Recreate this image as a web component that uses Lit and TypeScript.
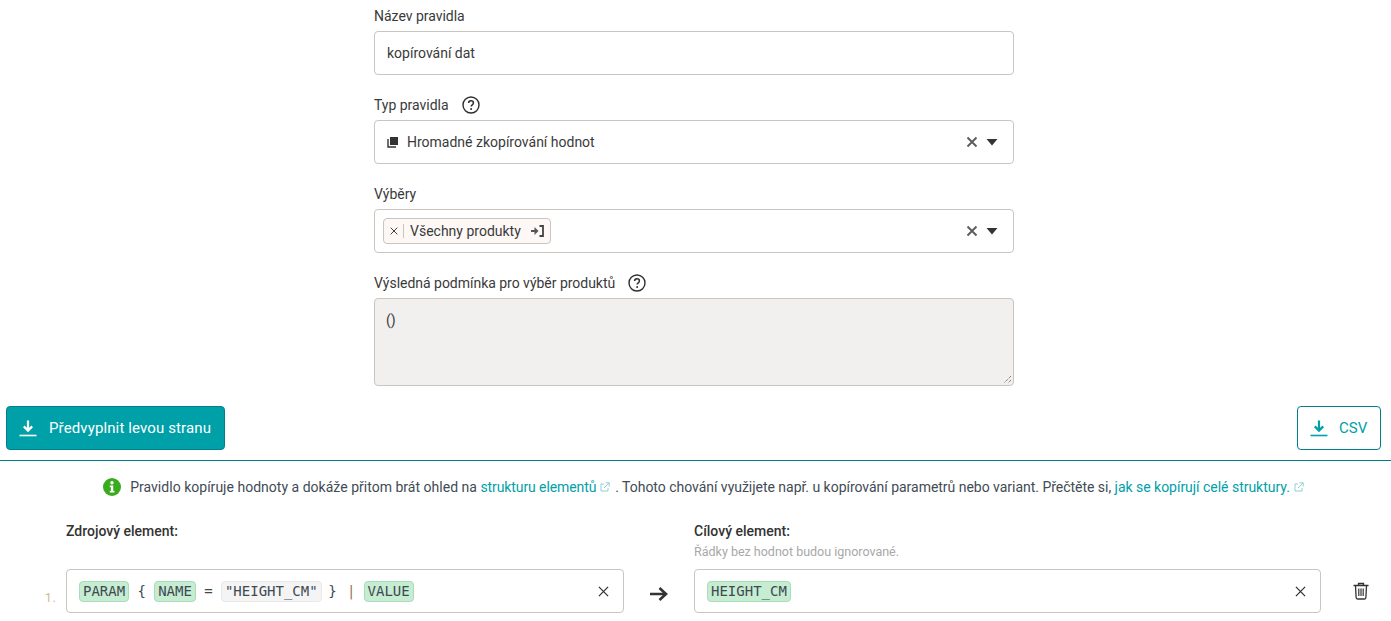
import { LitElement, html, css } from "lit";
import { customElement } from "lit/decorators.js";

const help = html`<svg class="help" width="18" height="18" viewBox="0 0 18 18"><circle cx="9" cy="9" r="8" fill="none" stroke="#2f2f2f" stroke-width="1.4"/><path d="M6.6 7.1c0-1.4 1-2.3 2.4-2.3s2.4.9 2.4 2.1c0 1.9-2.3 1.9-2.3 3.7" fill="none" stroke="#2f2f2f" stroke-width="1.5"/><circle cx="9.1" cy="13" r="1" fill="#2f2f2f"/></svg>`;
const clearIcon = html`<svg class="clr" width="12" height="12" viewBox="0 0 12 12"><path d="M1.5 1.5l9 9M10.5 1.5l-9 9" stroke="#5c5c5c" stroke-width="1.9" fill="none"/></svg>`;
const caret = html`<svg class="caret" width="12" height="8" viewBox="0 0 12 8"><path d="M0.5 1h11L6 7.5z" fill="#333"/></svg>`;
const download = (c: string) => html`<svg width="18" height="18" viewBox="0 0 18 18"><path d="M9 1.500v10M4.800 7.400L9 11.600l4.200-4.200" fill="none" stroke="${c}" stroke-width="2.200"/><path d="M.5 16.500h17" stroke="${c}" stroke-width="1.600"/></svg>`;
const ext = html`<svg class="ext" width="10" height="10" viewBox="0 0 10 10"><path d="M4 2H1v7h7V6M5.500.8h3.700v3.700M9 1L4 6" fill="none" stroke="#8fd0d3" stroke-width="1"/></svg>`;
const x = (s: number) => html`<svg class="x" width="${s}" height="${s}" viewBox="0 0 12 12"><path d="M1 1l10 10M11 1L1 11" stroke="#333" stroke-width="1.400" fill="none"/></svg>`;

@customElement("app-root")
export class AppRoot extends LitElement {
  static styles = css`
    :host { display: block; width: 1391px; height: 621px; overflow: hidden; background: #fff; font: 14px/20px Roboto, sans-serif; color: #3a3a3a; }
    * { box-sizing: border-box; }
    .form { width: 640px; margin: 0 auto 0 374px; padding-top: 6px; display: flex; flex-direction: column; gap: 20px; }
    .label { display: flex; align-items: center; height: 20px; margin-bottom: 5px; letter-spacing: -.02px; }
    .help { margin-left: 13px; }
    .control { height: 44px; border: 1px solid #c9c5bf; border-radius: 4px; display: flex; align-items: center; padding: 0 12px; background: #fff; }
    .select { padding-right: 15px; }
    .grow { flex: 1; }
    .stack { width: 12px; height: 12px; margin-right: 8px; }
    .clr { margin-right: 8px; }
    .tag { height: 26px; margin-left: -4px; border: 1px solid #c9c5bf; border-radius: 4px; background: #fdf8f6; display: flex; align-items: center; padding: 0 6px 0 5px; }
    .tag .x { margin-right: 5px; margin-left: 1px; }
    .tag .sep { width: 1px; height: 14px; background: #c9c5bf; margin-right: 6px; }
    .tag .go { margin-left: 10px; }
    .area { height: 88px; border: 1px solid #c9c5bf; border-radius: 4px; background: #f2f0ee; padding: 11px 11px; position: relative; }
    .grip { position: absolute; right: 1px; bottom: 1px; }
    .toolbar { display: flex; justify-content: space-between; padding: 20px 10px 10px 6px; border-bottom: 1px solid #007f8c; height: 75px; }
    .btn { height: 44px; border-radius: 4px; border: 1px solid #007f8c; display: flex; align-items: center; gap: 12px; padding: 0 12px; font-size: 15px; letter-spacing: .12px; }
    .btn.primary { width: 219px; background: #00a0a8; color: #fff; }
    .btn.outline { width: 84px; background: #fff; color: #00a0a8; letter-spacing: 0; gap: 11px; }
    .info { display: flex; justify-content: center; align-items: center; height: 20px; margin-top: 16px; margin-left: 21px; color: #424b54; font-size: 14px; white-space: pre; }
    .info .i { margin-right: 9px; }
    .info a { color: #00a0a8; }
    .info .lead { letter-spacing: .02px; }
    .info .first { letter-spacing: -.1px; }
    .info .mid { letter-spacing: -.025px; }
    .ext { margin: 0 5px 0 4px; }
    .rules { display: grid; grid-template-columns: 66px 558px 70px 627px 80px; margin-top: 24px; }
    .rules h4 { margin: 0; font-size: 14px; font-weight: 500; line-height: 20px; color: #333; }
    .hint { font-size: 12.5px; line-height: 16px; color: #a8a8a8; height: 28px; padding-top: 3px; }
    .head { height: 48px; }
    .num { font-size: 12px; letter-spacing: 1px; color: #d0b890; padding-left: 45px; align-self: end; line-height: 14px; margin-bottom: 8px; }
    .field { height: 44px; border: 1px solid #c9c5bf; border-radius: 4px; display: flex; align-items: center; padding: 0 14px 0 12px; font: 14px "DejaVu Sans Mono", monospace; color: #3d4a52; }
    .tk { height: 21px; border-radius: 4px; padding: 0 3px; display: flex; align-items: center; border: 1px solid #a9dcb9; background: #c6ecd2; }
    .tk.str { border-color: #e8e8e8; background: #f4f4f4; }
    .sym { margin: 0 8.3px; }
    .sym.close { margin: 0 10.5px 0 6.5px; }
    .sym.pipe { color: #a0705a; margin: 0 8px 0 0; }
    .arrow, .trash { display: flex; align-items: center; justify-content: center; height: 44px; }
    .arrow { padding-top: 6px; }
  `;

  render() {
    return html`
      <div class="form">
        <div><div class="label">Název pravidla</div><div class="control">kopírování dat</div></div>
        <div><div class="label">Typ pravidla ${help}</div>
          <div class="control select">
            <svg class="stack" viewBox="0 0 12 12"><path d="M3 1h8v8H3z" fill="#333"/><path d="M1 3v8h8" fill="none" stroke="#333" stroke-width="1.400"/></svg>
            <span class="grow">Hromadné zkopírování hodnot</span>${clearIcon}${caret}
          </div></div>
        <div><div class="label">Výběry</div>
          <div class="control select">
            <div class="tag">${x(8)}<span class="sep"></span>Všechny produkty
              <svg class="go" width="13" height="12" viewBox="0 0 13 12"><path d="M0 6h4" stroke="#555" stroke-width="2"/><path d="M3.500 2L7.500 6l-4 4z" fill="#555"/><path d="M8.500 1H12v10H8.500" fill="none" stroke="#444" stroke-width="1.800"/></svg>
            </div>
            <span class="grow"></span>${clearIcon}${caret}
          </div></div>
        <div><div class="label">Výsledná podmínka pro výběr produktů ${help}</div>
          <div class="area">()
            <svg class="grip" width="10" height="10" viewBox="0 0 10 10"><path d="M9 2L2 9M9 6L6 9" stroke="#555" stroke-width="1" stroke-dasharray="1 1"/></svg>
          </div></div>
      </div>
      <div class="toolbar">
        <div class="btn primary">${download("#fff")}Předvyplnit levou stranu</div>
        <div class="btn outline">${download("#00a0a8")}CSV</div>
      </div>
      <div class="info">
        <svg class="i" width="18" height="18" viewBox="0 0 18 18"><circle cx="9" cy="9" r="9" fill="#3aaa1f"/><circle cx="9" cy="4.800" r="1.700" fill="#fff"/><path d="M6.800 7.500h3.400v5.300h1.200v1.700H6.800v-1.700H8V9.200H6.800z" fill="#fff"/></svg>
        <span class="lead">Pravidlo kopíruje hodnoty a dokáže přitom brát ohled na </span><a class="first">strukturu elementů</a>${ext}<span class="mid">. Tohoto chování využijete např. u kopírování parametrů nebo variant. Přečtěte si, </span><a class="mid">jak se kopírují celé struktury.</a>${ext}
      </div>
      <div class="rules">
        <div></div>
        <div class="head"><h4>Zdrojový element:</h4></div>
        <div></div>
        <div class="head"><h4>Cílový element:</h4><div class="hint">Řádky bez hodnot budou ignorované.</div></div>
        <div></div>
        <div class="num">1.</div>
        <div class="field">
          <span class="tk">PARAM</span><span class="sym">{</span><span class="tk">NAME</span><span class="sym">=</span><span class="tk str">"HEIGHT_CM"</span><span class="sym close">}</span><span class="sym pipe">|</span><span class="tk">VALUE</span>
          <span class="grow"></span>${x(11)}
        </div>
        <div class="arrow"><svg width="18" height="16" viewBox="0 0 18 16"><path d="M0 8h16M9.500 2L16 8l-6.500 6" fill="none" stroke="#333" stroke-width="2.600"/></svg></div>
        <div class="field"><span class="tk">HEIGHT_CM</span><span class="grow"></span>${x(11)}</div>
        <div class="trash"><svg width="16" height="18" viewBox="0 0 16 18"><path d="M.5 3.500h15M5.500 3.500V1.500h5v2M2.500 3.500l.6 12a1.500 1.500 0 0 0 1.500 1.500h6.800a1.500 1.500 0 0 0 1.500-1.500l.6-12" fill="none" stroke="#333" stroke-width="1.300"/><path d="M5.800 6.500v7.500M8 6.500v7.500M10.200 6.500v7.500" stroke="#333" stroke-width="1.200"/></svg></div>
      </div>
    `;
  }
}
